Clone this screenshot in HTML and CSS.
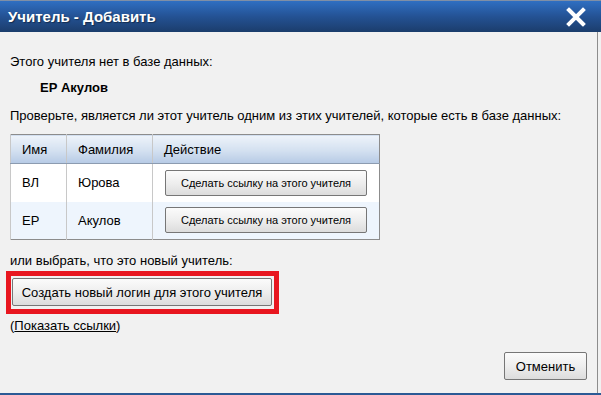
FILE: index.html
```html
<!DOCTYPE html>
<html lang="ru">
<head>
    <meta charset="UTF-8">
    <title>Учитель - Добавить</title>
    <link rel="stylesheet" href="styles.css">
</head>
<body>
    <div class="dialog">
        <div class="titlebar">
            <span class="title">Учитель - Добавить</span>
            <svg class="close" width="20" height="20" viewBox="0 0 20 20">
                <path d="M3 3 L17 17 M17 3 L3 17" stroke="#fff" stroke-width="4" stroke-linecap="square"/>
            </svg>
        </div>

        <div class="content">
            <p class="line">Этого учителя нет в базе данных:</p>
            <p class="teacher">ЕР Акулов</p>
            <p class="line check">Проверьте, является ли этот учитель одним из этих учителей, которые есть в базе данных:</p>

            <table class="matches">
                <thead>
                    <tr>
                        <th class="col-first">Имя</th>
                        <th class="col-last">Фамилия</th>
                        <th class="col-action">Действие</th>
                    </tr>
                </thead>
                <tbody>
                    <tr>
                        <td>ВЛ</td>
                        <td>Юрова</td>
                        <td><button class="btn btn-small">Сделать ссылку на этого учителя</button></td>
                    </tr>
                    <tr class="alt">
                        <td>ЕР</td>
                        <td>Акулов</td>
                        <td><button class="btn btn-small">Сделать ссылку на этого учителя</button></td>
                    </tr>
                </tbody>
            </table>

            <p class="line or">или выбрать, что это новый учитель:</p>
            <div class="highlight">
                <button class="btn btn-create">Создать новый логин для этого учителя</button>
            </div>
            <p class="line links">(<a href="#">Показать ссылки</a>)</p>

            <div class="footer">
                <button class="btn btn-cancel">Отменить</button>
            </div>
        </div>
    </div>
</body>
</html>
```

FILE: styles.css
```css
* {
    margin: 0;
    padding: 0;
    box-sizing: border-box;
}

body {
    font-family: "Liberation Sans", Arial, sans-serif;
    font-size: 13px;
    color: #000;
    background-color: #f1f1f1;
}

.dialog {
    width: 601px;
    height: 395px;
    display: flex;
    flex-direction: column;
    border-bottom: 2px solid #2b5a95;
}

/* Title bar */
.titlebar {
    height: 32px;
    flex-shrink: 0;
    display: flex;
    align-items: center;
    justify-content: space-between;
    padding: 0 15px 0 8px;
    background: linear-gradient(to bottom, #2f6fc2 0%, #245294 50%, #1b3d6c 100%);
    border-top: 1px solid #7f8fa6;
}

.title {
    color: #fff;
    font-weight: bold;
    font-size: 15px;
    text-shadow: 1px 1px 1px rgba(0, 0, 0, 0.4);
}

/* Content */
.content {
    flex: 1;
    padding: 22px 10px 0 10px;
    border-right: 1px solid #8d8d8d;
    margin-right: 3px;
    display: flex;
    flex-direction: column;
    align-items: flex-start;
}

.line {
    line-height: 16px;
}

.teacher {
    font-weight: bold;
    line-height: 16px;
    margin: 10px 0 0 30px;
}

.check {
    margin-top: 12px;
}

/* Table */
.matches {
    margin-top: 10px;
    border-collapse: collapse;
    border: 1px solid #8c8c8c;
    width: 370px;
}

.matches th {
    height: 29px;
    text-align: left;
    font-weight: normal;
    padding: 0 0 0 11px;
    background: linear-gradient(to bottom, #eef3fa 0%, #d3e0f0 55%, #b6cae5 100%);
    border-left: 1px solid #c8c8c8;
    border-bottom: 1px solid #8c9bb0;
}

.matches td {
    height: 38px;
    padding: 0 0 0 11px;
    border-left: 1px solid #c8c8c8;
    background-color: #fff;
}

.matches tr.alt td {
    background-color: #eef5fd;
}

.col-first {
    width: 56px;
}

.col-last {
    width: 86px;
}

/* Buttons */
.btn {
    font-family: "Liberation Sans", Arial, sans-serif;
    color: #000;
    background: linear-gradient(to bottom, #fbfbfb 0%, #eeeeee 50%, #dcdcdc 100%);
    border: 1px solid #767676;
    border-radius: 2px;
    cursor: pointer;
}

.btn-small {
    width: 202px;
    height: 26px;
    font-size: 11px;
    margin-left: 1px;
}

.or {
    margin-top: 13px;
}

.highlight {
    margin: 2px 0 0 -4px;
    border: 5px solid #e8161f;
    padding: 2px 2px 3px 1px;
}

.btn-create {
    width: 260px;
    height: 28px;
    font-size: 13px;
}

.links {
    margin-top: 4px;
}

.links a {
    color: #000;
}

.footer {
    align-self: stretch;
    display: flex;
    justify-content: flex-end;
    margin-top: 18px;
    padding-right: 0;
}

.btn-cancel {
    width: 83px;
    height: 28px;
    font-size: 13px;
}
```
